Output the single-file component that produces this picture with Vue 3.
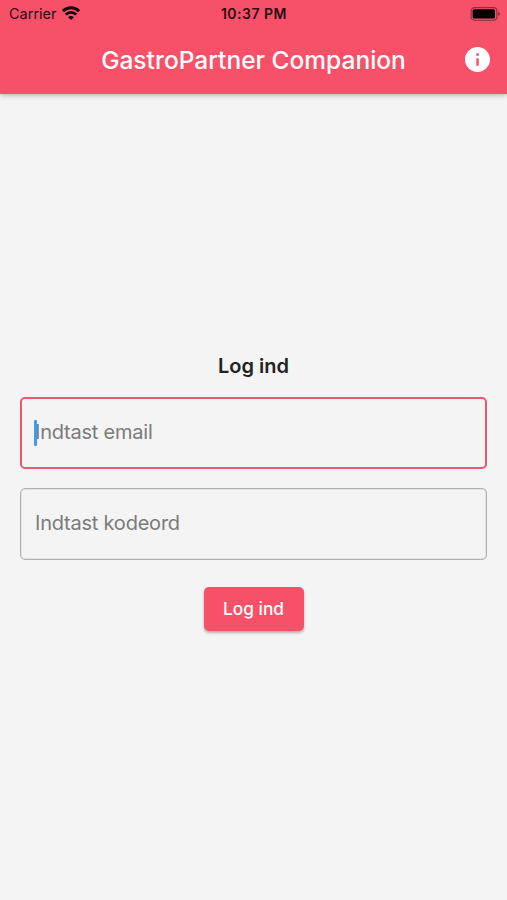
<script setup>
import { ref } from 'vue'

const email = ref('')
const password = ref('')
</script>

<template>
  <div class="screen">
    <header class="top">
      <div class="status">
        <div class="carrier">
          <span class="carrier-name">Carrier</span>
          <svg class="wifi" viewBox="0 0 18 14" width="18" height="14">
            <g fill="none" stroke="#16060a" stroke-width="2.9">
              <path d="M0.9 5.1A11.5 11.5 0 0 1 17.1 5.1" />
              <path d="M3.8 8.6A7.3 7.3 0 0 1 14.2 8.6" />
            </g>
            <path d="M9 14L6 11.3A4.4 4.4 0 0 1 12 11.3Z" fill="#16060a" />
          </svg>
        </div>
        <span class="time">10:37 PM</span>
        <svg class="battery" viewBox="0 0 31 14" width="31" height="14">
          <rect x="1.1" y="0.6" width="25.8" height="12.6" rx="3.4" fill="none" stroke="#8c2c3c" stroke-width="1.1" />
          <rect x="2.6" y="2.2" width="22.4" height="9.4" rx="1.6" fill="#000" />
          <path d="M28.2 4.7Q30 5.4 30 6.9T28.2 9.1Z" fill="#8c2c3c" />
        </svg>
      </div>
      <div class="bar">
        <h1 class="title">GastroPartner Companion</h1>
        <svg class="info" viewBox="0 0 25 25" width="25" height="25">
          <circle cx="12.5" cy="12.5" r="12.5" fill="#fff" />
          <rect x="11.3" y="6.3" width="2.5" height="2.5" fill="#f75169" />
          <rect x="11.3" y="11.3" width="2.5" height="7.4" fill="#f75169" />
        </svg>
      </div>
    </header>
    <main class="form">
      <h2 class="heading">Log ind</h2>
      <label class="field focused">
        <input v-model="email" class="input" type="text" placeholder="Indtast email" />
        <span class="caret"></span>
      </label>
      <label class="field">
        <input v-model="password" class="input" type="password" placeholder="Indtast kodeord" />
      </label>
      <button class="submit" type="button">Log ind</button>
    </main>
  </div>
</template>

<style>
body {
  background: #f4f4f4;
}
</style>

<style scoped>
.screen {
  height: 900px;
  display: flex;
  flex-direction: column;
  overflow: hidden;
  background: #f4f4f4;
  font-family: Inter, "Liberation Sans", sans-serif;
}
.top {
  height: 94px;
  flex: none;
  background: #f75169;
  box-shadow: 0 1px 5px rgba(0, 0, 0, 0.3);
}
.status {
  height: 27px;
  box-sizing: border-box;
  padding: 0 7px 0 9px;
  display: grid;
  grid-template-columns: 1fr auto 1fr;
  align-items: center;
  color: #2c0c12;
}
.carrier {
  display: flex;
  align-items: center;
  gap: 5px;
}
.carrier-name {
  font-size: 14.5px;
  line-height: 20px;
}
.wifi {
  margin-top: -1px;
}
.time {
  font-size: 14px;
  line-height: 20px;
  font-weight: 600;
  letter-spacing: 0.5px;
  margin-right: 1px;
}
.battery {
  justify-self: end;
  margin-right: -1px;
}
.bar {
  height: 65px;
  display: grid;
  grid-template-columns: 1fr auto 1fr;
  align-items: center;
  padding: 0 17px;
}
.title {
  grid-column: 2;
  margin: 0;
  font-size: 24.5px;
  line-height: 30px;
  font-weight: 500;
  color: #fff;
  white-space: nowrap;
}
.info {
  justify-self: end;
}
.form {
  flex: 1;
  display: flex;
  flex-direction: column;
  align-items: center;
  padding: 259px 20px 0;
}
.heading {
  margin: 0 0 18px;
  font-size: 20px;
  line-height: 26px;
  font-weight: 600;
  color: #222;
}
.field {
  position: relative;
  box-sizing: border-box;
  width: 467px;
  height: 72px;
  margin-bottom: 19px;
  padding: 0 14px;
  border: 1px solid #b0b0b0;
  border-radius: 5px;
  box-shadow: inset 0 0 0 1px rgba(0, 0, 0, 0.07);
  display: flex;
  align-items: center;
}
.focused {
  border: 2px solid #ed5870;
  padding: 0 13px;
  box-shadow: none;
}
.input {
  width: 100%;
  padding: 0 0 2px;
  border: 0;
  outline: 0;
  background: transparent;
  font: 400 20px/26px Inter, "Liberation Sans", sans-serif;
  letter-spacing: -0.22px;
}
.input::placeholder {
  color: #7b7b7b;
  opacity: 1;
}
.caret {
  position: absolute;
  left: 12px;
  top: 21px;
  width: 2.5px;
  height: 26px;
  border-radius: 1px;
  background: #3f9cf5;
}
.submit {
  width: 100px;
  height: 44px;
  margin-top: 8px;
  padding: 0;
  border: 0;
  border-radius: 5px;
  background: #f75169;
  box-shadow: 0 2px 3px rgba(0, 0, 0, 0.28);
  color: #fff;
  font: 500 17.3px/24px Inter, "Liberation Sans", sans-serif;
}
</style>
